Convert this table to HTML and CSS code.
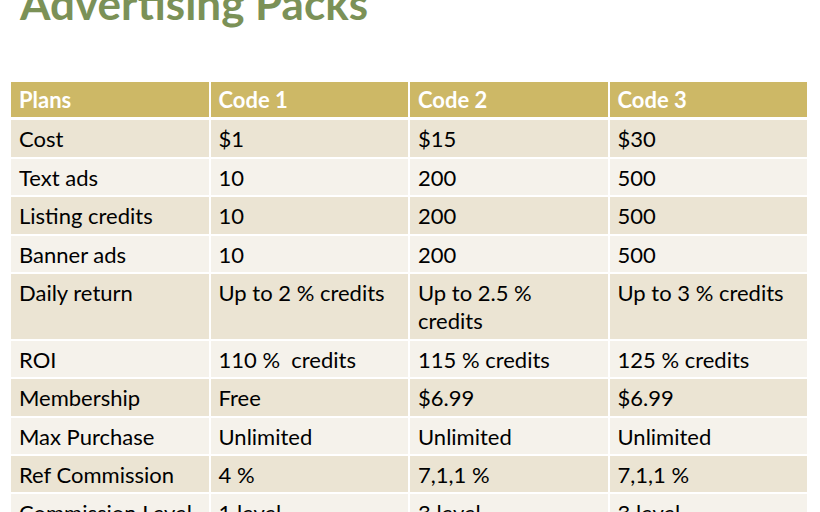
FILE: index.html
```html
<!DOCTYPE html>
<html>
<head>
<meta charset="utf-8">
<link rel="stylesheet" href="styles.css">
</head>
<body>
<div class="slide">
  <h1 class="title">Advertising Packs</h1>
  <table class="packs">
    <thead>
      <tr><th>Plans</th><th>Code 1</th><th>Code 2</th><th>Code 3</th></tr>
    </thead>
    <tbody>
      <tr><td>Cost</td><td>$1</td><td>$15</td><td>$30</td></tr>
      <tr><td>Text ads</td><td>10</td><td>200</td><td>500</td></tr>
      <tr><td>Listing credits</td><td>10</td><td>200</td><td>500</td></tr>
      <tr><td>Banner ads</td><td>10</td><td>200</td><td>500</td></tr>
      <tr><td>Daily return</td><td>Up to 2 % credits</td><td>Up to 2.5 % credits</td><td>Up to 3 % credits</td></tr>
      <tr><td>ROI</td><td>110 %&nbsp; credits</td><td>115 % credits</td><td>125 % credits</td></tr>
      <tr><td>Membership</td><td>Free</td><td>$6.99</td><td>$6.99</td></tr>
      <tr><td>Max Purchase</td><td>Unlimited</td><td>Unlimited</td><td>Unlimited</td></tr>
      <tr><td>Ref Commission</td><td>4 %</td><td>7,1,1 %</td><td>7,1,1 %</td></tr>
      <tr><td>Commission Level</td><td>1 level</td><td>3 level</td><td>3 level</td></tr>
    </tbody>
  </table>
</div>
</body>
</html>
```

FILE: styles.css
```css
html, body {
  margin: 0;
  padding: 0;
  background: #ffffff;
}
.slide {
  width: 820px;
  padding: 0 0 0 9px;
  box-sizing: border-box;
  font-family: Lato, "Liberation Sans", sans-serif;
}
.title {
  margin: -24px 0 0 11px;
  font-size: 44px;
  line-height: 54px;
  font-weight: 700;
  color: #7b9157;
  height: 104px;
}
.packs {
  border-collapse: collapse;
  width: 800px;
  table-layout: fixed;
  font-size: 22px;
  color: #000;
}
.packs th, .packs td {
  border: 2px solid #ffffff;
  padding: 5px 14px 3px 8px;
  line-height: 28.4px;
  text-align: left;
  vertical-align: top;
}
.packs th {
  background: #cdb866;
  color: #ffffff;
  font-weight: 700;
  border-bottom-width: 3px;
  padding-top: 4px;
  padding-bottom: 3px;
}
.packs tbody tr:nth-child(odd) td {
  background: #ebe4d3;
}
.packs tbody tr:nth-child(even) td {
  background: #f5f2eb;
}
```
